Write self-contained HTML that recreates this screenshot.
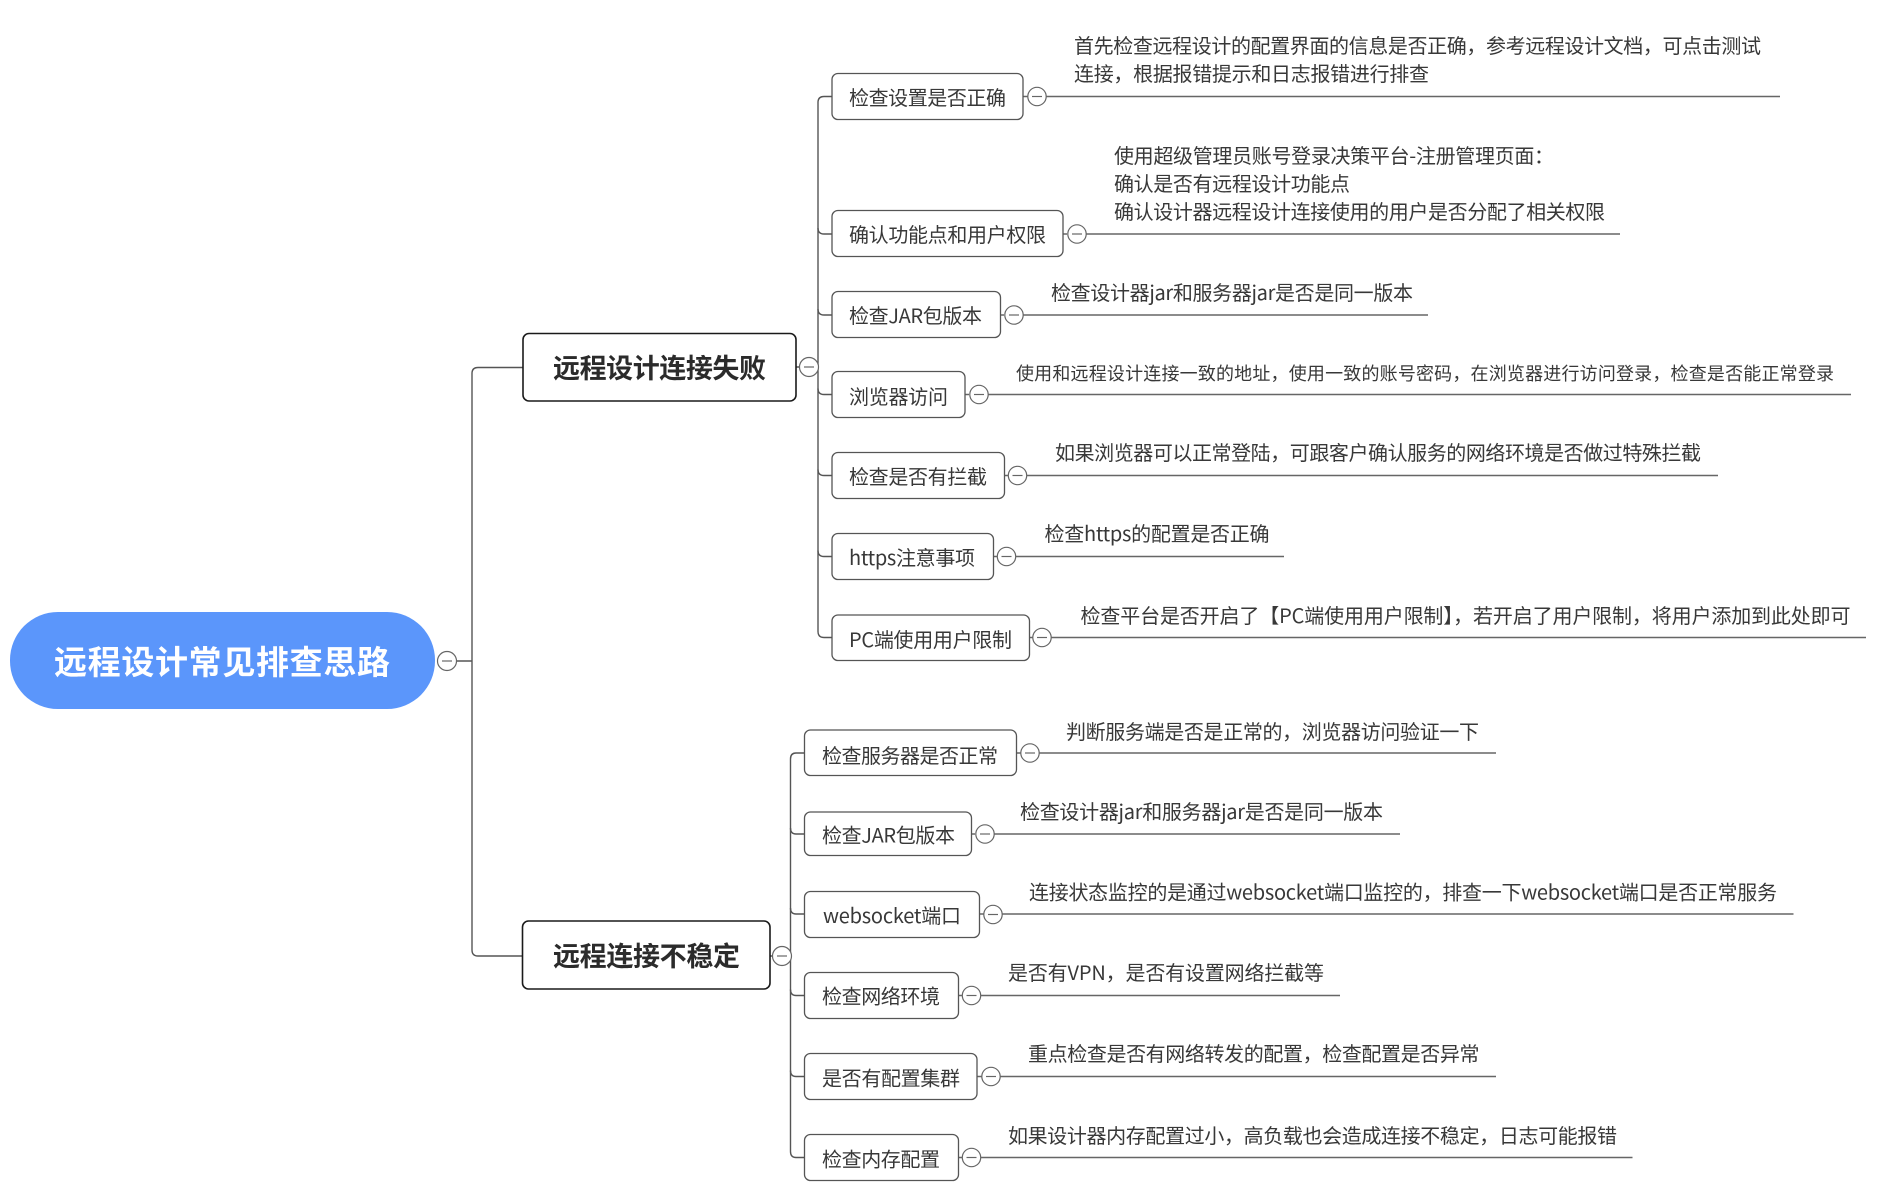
<!DOCTYPE html>
<html lang="zh">
<head>
<meta charset="utf-8">
<title>远程设计常见排查思路</title>
<style>
html,body{margin:0;padding:0;background:#fff;width:1892px;height:1196px;overflow:hidden}
svg{display:block}
text{font-family:"Liberation Sans","Noto Sans CJK SC",sans-serif;fill:#383838;font-size:20px}
.cn{font-family:"Noto Sans CJK SC","Liberation Sans",sans-serif}
.b{font-weight:700;font-size:27px;fill:#2b2b2b}
.r{font-weight:700;font-size:33px;fill:#fff}
.s{font-size:18px}
.l{fill:none;stroke:#555;stroke-width:1.4}
.u{fill:none;stroke:#666;stroke-width:1.5}
.box{fill:#fff;stroke:#555;stroke-width:1.3}
.bb{fill:#fff;stroke:#1a1a1a;stroke-width:1.6}
.c{fill:#fff;stroke:#666;stroke-width:1.2}
.m{stroke:#666;stroke-width:1.2}
</style>
</head>
<body>
<svg width="1892" height="1196" viewBox="0 0 1892 1196" xmlns="http://www.w3.org/2000/svg">
<rect width="1892" height="1196" fill="#fff"/>

<!-- connectors -->
<path class="l" d="M456 661H472M523 367.500H478Q472 367.500 472 373.500V950Q472 956 478 956H522"/>
<path class="l" d="M796 367H800M832 96.500H824Q818 96.500 818 102.500V631.500Q818 637.500 824 637.500H832"/>
<path class="l" d="M818 228Q818 234 824 234H832M818 309Q818 315 824 315H832M818 388.500Q818 394.500 824 394.500H832M818 469.500Q818 475.500 824 475.500H832M818 550.500Q818 556.500 824 556.500H832"/>
<path class="l" d="M770 956H773M804 753H796Q790.500 753 790.500 759V1151.500Q790.500 1157.500 796 1157.500H804"/>
<path class="l" d="M790.500 828Q790.500 834 796 834H804M790.500 908Q790.500 914 796 914H804M790.500 989.500Q790.500 995.500 796 995.500H804M790.500 1070.500Q790.500 1076.500 796 1076.500H804"/>

<!-- underlines -->
<path class="u" d="M1023 96.500H1028M1046 96.500H1780"/>
<path class="u" d="M1063 234H1067M1086 234H1620"/>
<path class="u" d="M1000 315H1004M1023 315H1428"/>
<path class="u" d="M965 394.500H969M988 394.500H1851"/>
<path class="u" d="M1004 475.500H1008M1027 475.500H1718"/>
<path class="u" d="M993.500 556.500H997M1016 556.500H1284"/>
<path class="u" d="M1029.500 637.500H1033M1051 637.500H1866"/>
<path class="u" d="M1016 753H1021M1039 753H1496"/>
<path class="u" d="M971 834H975M994 834H1400"/>
<path class="u" d="M980 914H984M1002 914H1793.500"/>
<path class="u" d="M958 995.500H962M981 995.500H1340"/>
<path class="u" d="M977 1076.500H982M1000 1076.500H1496"/>
<path class="u" d="M958 1157.500H962M981 1157.500H1632.500"/>

<!-- root -->
<rect x="10" y="612" width="425" height="97" rx="48" ry="48" fill="#5b96fb"/>
<text class="cn r" x="54" y="674" textLength="336" lengthAdjust="spacing">远程设计常见排查思路</text>

<!-- branches -->
<rect class="bb" x="523" y="333.500" width="273" height="67.500" rx="6"/>
<text class="cn b" x="553" y="378" textLength="213" lengthAdjust="spacing">远程设计连接失败</text>
<rect class="bb" x="522.500" y="921" width="247.500" height="68" rx="6"/>
<text class="cn b" x="553" y="966" textLength="187" lengthAdjust="spacing">远程连接不稳定</text>

<!-- child boxes: group 1 -->
<rect class="box" x="832" y="73.500" width="191" height="46" rx="6"/>
<text class="cn" x="849" y="105" textLength="157" lengthAdjust="spacing">检查设置是否正确</text>
<rect class="box" x="832" y="210.500" width="231" height="46" rx="6"/>
<text class="cn" x="849" y="242" textLength="197" lengthAdjust="spacing">确认功能点和用户权限</text>
<rect class="box" x="832" y="291.500" width="168.500" height="46" rx="6"/>
<text class="cn" x="849" y="323" textLength="133" lengthAdjust="spacing">检查JAR包版本</text>
<rect class="box" x="832" y="371.500" width="133" height="46" rx="6"/>
<text class="cn" x="849" y="404" textLength="99" lengthAdjust="spacing">浏览器访问</text>
<rect class="box" x="832" y="452.500" width="172.500" height="46" rx="6"/>
<text class="cn" x="849" y="484" textLength="138" lengthAdjust="spacing">检查是否有拦截</text>
<rect class="box" x="832" y="533.500" width="161.500" height="46" rx="6"/>
<text class="cn" x="849" y="565" textLength="126" lengthAdjust="spacing">https注意事项</text>
<rect class="box" x="832" y="615" width="197.500" height="45.500" rx="6"/>
<text class="cn" x="849" y="647" textLength="163" lengthAdjust="spacing">PC端使用用户限制</text>

<!-- child boxes: group 2 -->
<rect class="box" x="804.500" y="730" width="212" height="45.500" rx="6"/>
<text class="cn" x="822" y="763" textLength="176" lengthAdjust="spacing">检查服务器是否正常</text>
<rect class="box" x="804.500" y="812" width="167" height="43.500" rx="6"/>
<text class="cn" x="822" y="842.500" textLength="133" lengthAdjust="spacing">检查JAR包版本</text>
<rect class="box" x="804.500" y="891.500" width="175" height="46" rx="6"/>
<text class="cn" x="823" y="923" textLength="138" lengthAdjust="spacing">websocket端口</text>
<rect class="box" x="804.500" y="972.500" width="154" height="46" rx="6"/>
<text class="cn" x="822" y="1003.500" textLength="118" lengthAdjust="spacing">检查网络环境</text>
<rect class="box" x="804.500" y="1053.500" width="172.500" height="46" rx="6"/>
<text class="cn" x="822" y="1085.500" textLength="138" lengthAdjust="spacing">是否有配置集群</text>
<rect class="box" x="804.500" y="1134.500" width="154" height="46" rx="6"/>
<text class="cn" x="822" y="1166.500" textLength="118" lengthAdjust="spacing">检查内存配置</text>

<!-- collapse circles -->
<g>
<ellipse class="c" cx="447" cy="661" rx="9.500" ry="9.500"/><path class="m" d="M442 661H452"/>
<ellipse class="c" cx="809" cy="367" rx="9.500" ry="9.500"/><path class="m" d="M804 367H814"/>
<ellipse class="c" cx="782" cy="956" rx="9.500" ry="9.500"/><path class="m" d="M777 956H787"/>
<ellipse class="c" cx="1037" cy="96.500" rx="9.200" ry="9.200"/><path class="m" d="M1032 96.500H1042"/>
<ellipse class="c" cx="1077" cy="234" rx="9.200" ry="9.200"/><path class="m" d="M1072 234H1082"/>
<ellipse class="c" cx="1014" cy="315" rx="9.200" ry="9.200"/><path class="m" d="M1009 315H1019"/>
<ellipse class="c" cx="979" cy="394.500" rx="9.200" ry="9.200"/><path class="m" d="M974 394.500H984"/>
<ellipse class="c" cx="1017.500" cy="475.500" rx="9.200" ry="9.200"/><path class="m" d="M1012.500 475.500H1022.500"/>
<ellipse class="c" cx="1006.500" cy="556.500" rx="9.200" ry="9.200"/><path class="m" d="M1001.500 556.500H1011.500"/>
<ellipse class="c" cx="1042" cy="637.500" rx="9.200" ry="9.200"/><path class="m" d="M1037 637.500H1047"/>
<ellipse class="c" cx="1030" cy="753" rx="9.200" ry="9.200"/><path class="m" d="M1025 753H1035"/>
<ellipse class="c" cx="985" cy="834" rx="9.200" ry="9.200"/><path class="m" d="M980 834H990"/>
<ellipse class="c" cx="993" cy="914.500" rx="9.200" ry="9.200"/><path class="m" d="M988 914.500H998"/>
<ellipse class="c" cx="971.500" cy="995.500" rx="9.200" ry="9.200"/><path class="m" d="M966.500 995.500H976.500"/>
<ellipse class="c" cx="991" cy="1076.500" rx="9.200" ry="9.200"/><path class="m" d="M986 1076.500H996"/>
<ellipse class="c" cx="971.500" cy="1157.500" rx="9.200" ry="9.200"/><path class="m" d="M966.500 1157.500H976.500"/>
</g>

<!-- notes -->
<text class="cn" x="1074" y="53" textLength="687" lengthAdjust="spacing">首先检查远程设计的配置界面的信息是否正确，参考远程设计文档，可点击测试</text>
<text class="cn" x="1074" y="81" textLength="355" lengthAdjust="spacing">连接，根据报错提示和日志报错进行排查</text>
<text class="cn" x="1114" y="163" textLength="440" lengthAdjust="spacing">使用超级管理员账号登录决策平台-注册管理页面：</text>
<text class="cn" x="1114" y="191" textLength="236" lengthAdjust="spacing">确认是否有远程设计功能点</text>
<text class="cn" x="1114" y="219" textLength="491" lengthAdjust="spacing">确认设计器远程设计连接使用的用户是否分配了相关权限</text>
<text class="cn" x="1051" y="300" textLength="362" lengthAdjust="spacing">检查设计器jar和服务器jar是否是同一版本</text>
<text class="cn s" x="1016" y="380" textLength="818" lengthAdjust="spacing">使用和远程设计连接一致的地址，使用一致的账号密码，在浏览器进行访问登录，检查是否能正常登录</text>
<text class="cn" x="1055" y="460" textLength="646" lengthAdjust="spacing">如果浏览器可以正常登陆，可跟客户确认服务的网络环境是否做过特殊拦截</text>
<text class="cn" x="1044.500" y="541" textLength="225" lengthAdjust="spacing">检查https的配置是否正确</text>
<text class="cn" x="1080.500" y="623" textLength="770" lengthAdjust="spacing">检查平台是否开启了【PC端使用用户限制】，若开启了用户限制，将用户添加到此处即可</text>
<text class="cn" x="1066" y="739" textLength="413" lengthAdjust="spacing">判断服务端是否是正常的，浏览器访问验证一下</text>
<text class="cn" x="1020" y="819" textLength="363" lengthAdjust="spacing">检查设计器jar和服务器jar是否是同一版本</text>
<text class="cn" x="1029" y="899.500" textLength="748" lengthAdjust="spacing">连接状态监控的是通过websocket端口监控的，排查一下websocket端口是否正常服务</text>
<text class="cn" x="1008" y="980" textLength="316" lengthAdjust="spacing">是否有VPN，是否有设置网络拦截等</text>
<text class="cn" x="1028" y="1061" textLength="451.500" lengthAdjust="spacing">重点检查是否有网络转发的配置，检查配置是否异常</text>
<text class="cn" x="1008" y="1143" textLength="609" lengthAdjust="spacing">如果设计器内存配置过小，高负载也会造成连接不稳定，日志可能报错</text>
</svg>
</body>
</html>
